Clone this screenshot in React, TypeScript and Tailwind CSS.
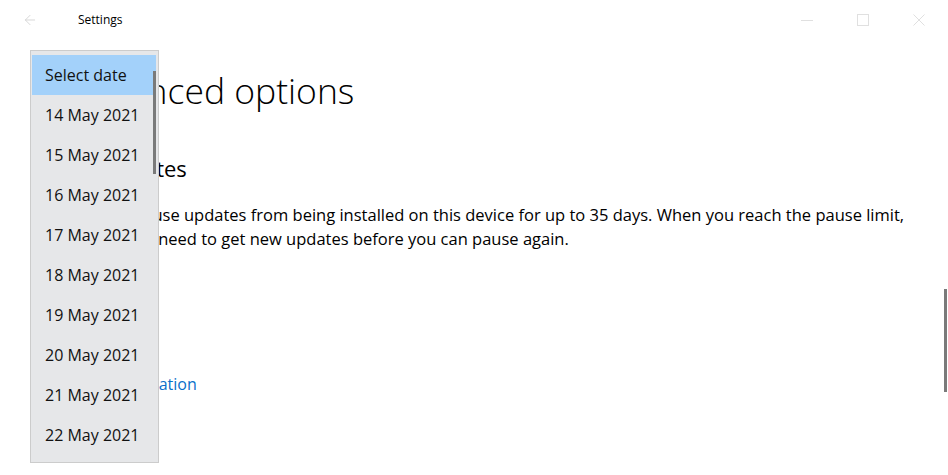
import { ArrowLeft } from "lucide-react";

const dates = [
  "14 May 2021",
  "15 May 2021",
  "16 May 2021",
  "17 May 2021",
  "18 May 2021",
  "19 May 2021",
  "20 May 2021",
  "21 May 2021",
  "22 May 2021",
];

function WindowControls() {
  return (
    <div className="flex items-center h-10 text-[#e0e0e0]">
      <div className="w-14 flex justify-center">
        <svg width="14" height="14" viewBox="0 0 14 14">
          <line x1="1" y1="7.5" x2="13" y2="7.5" stroke="currentColor" strokeWidth="1" />
        </svg>
      </div>
      <div className="w-14 flex justify-center">
        <svg width="14" height="14" viewBox="0 0 14 14">
          <rect x="1.5" y="1.5" width="11" height="11" fill="none" stroke="currentColor" strokeWidth="1" />
        </svg>
      </div>
      <div className="w-14 flex justify-center">
        <svg width="14" height="14" viewBox="0 0 14 14">
          <path d="M1.5 1.5 L12.5 12.5 M12.5 1.5 L1.5 12.5" stroke="currentColor" strokeWidth="1" />
        </svg>
      </div>
    </div>
  );
}

export default function App() {
  return (
    <div
      className="relative w-[948px] h-[475px] overflow-hidden bg-white text-black"
      style={{ fontFamily: '"Open Sans", "Noto Sans", sans-serif' }}
    >
      {/* Title bar */}
      <div className="flex items-center justify-between h-10">
        <div className="flex items-center">
          <div className="w-[60px] flex justify-center">
            <ArrowLeft className="w-4 h-4 text-[#d0d0d0]" strokeWidth={1.25} />
          </div>
          <span className="ml-[18px] text-[12px] text-black">Settings</span>
        </div>
        <div className="mr-[1px]">
          <WindowControls />
        </div>
      </div>

      {/* Page content */}
      <div className="pl-[36px]">
        <h1 className="mt-[30px] pl-[33px] text-[35.5px] leading-[40px] font-light whitespace-nowrap">Advanced options</h1>
        <h2 className="mt-[43px] text-[22px] leading-[30px]">Pause updates</h2>
        <p className="mt-[20px] text-[16.5px] leading-[24px] whitespace-nowrap">
          Temporarily pause updates from being installed on this device for up to 35 days. When you reach the pause limit,
          <br />
          your device will need to get new updates before you can pause again.
        </p>
        <a className="block mt-[121px] text-[16px] leading-[24px] text-[#0a6fc9]">Delivery Optimization</a>
      </div>

      {/* Page scrollbar */}
      <div className="absolute left-[944px] top-[289px] w-[3px] h-[103px] bg-[#7a7a7a]" />

      {/* Date dropdown */}
      <div className="absolute left-[30px] top-[50px] w-[129px] h-[413px] border border-[#cccccc] bg-[#e6e7e9] pt-[4px] pl-[1px] pr-[2px]">
        <div className="h-[40px] flex items-center pl-[13px] bg-[#a3d1fa] text-[16px] text-[#111]">Select date</div>
        {dates.map((d) => (
          <div key={d} className="h-[40px] flex items-center pl-[13px] text-[16px] text-[#111]">
            {d}
          </div>
        ))}
        <div className="absolute left-[122px] top-[20px] w-[3px] h-[103px] bg-[#7a7a7a]" />
      </div>
    </div>
  );
}
